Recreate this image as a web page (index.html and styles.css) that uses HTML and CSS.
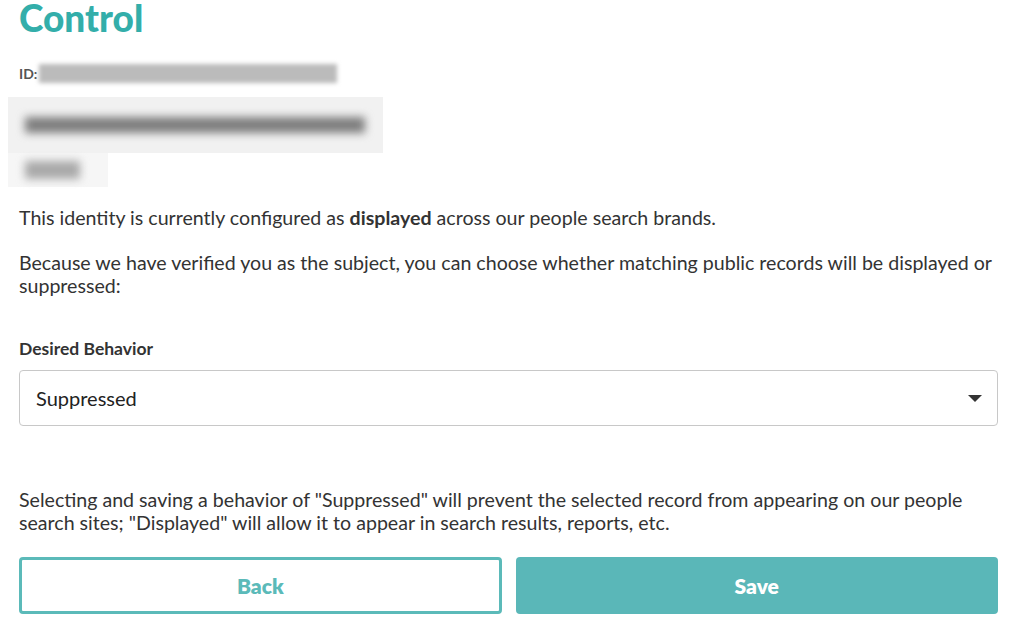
FILE: index.html
```html
<!DOCTYPE html>
<html lang="en">
<head>
<meta charset="utf-8">
<title>Control</title>
<link rel="stylesheet" href="styles.css">
</head>
<body>
<main class="page">
  <h1 class="title">Control</h1>
  <div class="id-row">
    <span class="id-label">ID:</span>
    <span class="id-blur"></span>
  </div>
  <div class="redacted">
    <div class="red-top"><span class="bar bar-long"></span></div>
    <div class="red-bottom"><span class="bar bar-short"></span></div>
  </div>
  <p class="text p1">This identity is currently configured as <strong>displayed</strong> across our people search brands.</p>
  <p class="text p2">Because we have verified you as the subject, you can choose whether matching public records will be displayed or suppressed:</p>
  <label class="field-label" for="behavior">Desired Behavior</label>
  <div class="select" id="behavior">
    <span class="select-value">Suppressed</span>
    <svg class="caret" width="14" height="7" viewBox="0 0 14 7"><path d="M0 0H14L7 7Z" fill="#333"/></svg>
  </div>
  <p class="text p3">Selecting and saving a behavior of "Suppressed" will prevent the selected record from appearing on our people search sites; "Displayed" will allow it to appear in search results, reports, etc.</p>
  <div class="actions">
    <button class="btn btn-back" type="button">Back</button>
    <button class="btn btn-save" type="button">Save</button>
  </div>
</main>
</body>
</html>
```
FILE: styles.css
```css
html, body {
  margin: 0;
  padding: 0;
  background: #fff;
}
body {
  font-family: Lato, "Liberation Sans", sans-serif;
  color: #333;
}
.page {
  padding: 0 21px 0 19px;
  display: flex;
  flex-direction: column;
}
.title {
  margin: 0;
  font-size: 37px;
  line-height: 36px;
  font-weight: 900;
  color: #33aeaa;
}
.id-row {
  margin-top: 27px;
  display: flex;
  align-items: center;
  height: 20px;
}
.id-label {
  font-size: 14px;
  font-weight: 700;
  color: #555;
}
.id-blur {
  width: 298px;
  height: 19px;
  margin-left: 2px;
  background: #bbb;
  filter: blur(2px);
}
.redacted {
  margin: 14px 0 0 -11px;
  display: flex;
  flex-direction: column;
  align-items: flex-start;
}
.red-top {
  width: 375px;
  height: 56px;
  background: #f1f1f1;
  display: flex;
  align-items: center;
  padding-left: 17px;
  box-sizing: border-box;
}
.red-bottom {
  width: 100px;
  height: 34px;
  background: #f6f6f6;
  display: flex;
  align-items: center;
  padding-left: 17px;
  box-sizing: border-box;
}
.bar {
  display: block;
  filter: blur(4px);
}
.bar-long {
  width: 340px;
  height: 16px;
  background: #7e7e7e;
}
.bar-short {
  width: 55px;
  height: 18px;
  background: #a9a9a9;
}
.text {
  margin: 0;
  font-size: 19.6px;
  line-height: 23px;
}
.p1 { margin-top: 19px; }
.p2 { margin-top: 22px; }
.field-label {
  margin-top: 42px;
  font-size: 17.5px;
  line-height: 20px;
  font-weight: 700;
  color: #333;
}
.select {
  margin-top: 11px;
  height: 56px;
  box-sizing: border-box;
  border: 1px solid #c8c8c8;
  border-radius: 4px;
  display: flex;
  align-items: center;
  justify-content: space-between;
  padding: 0 15px 0 16px;
}
.select-value {
  font-size: 20px;
  color: #222;
}
.p3 { margin-top: 62px; }
.actions {
  margin-top: 23px;
  display: grid;
  grid-template-columns: 1fr 1fr;
  gap: 14px;
}
.btn {
  height: 57px;
  border-radius: 4px;
  font-family: Lato, "Liberation Sans", sans-serif;
  font-size: 21px;
  font-weight: 800;
  box-sizing: border-box;
}
.btn-back {
  background: #fff;
  border: 3px solid #5bbab9;
  color: #5bbab9;
}
.btn-save {
  background: #5ab7b8;
  border: 0;
  color: #fff;
}
```
